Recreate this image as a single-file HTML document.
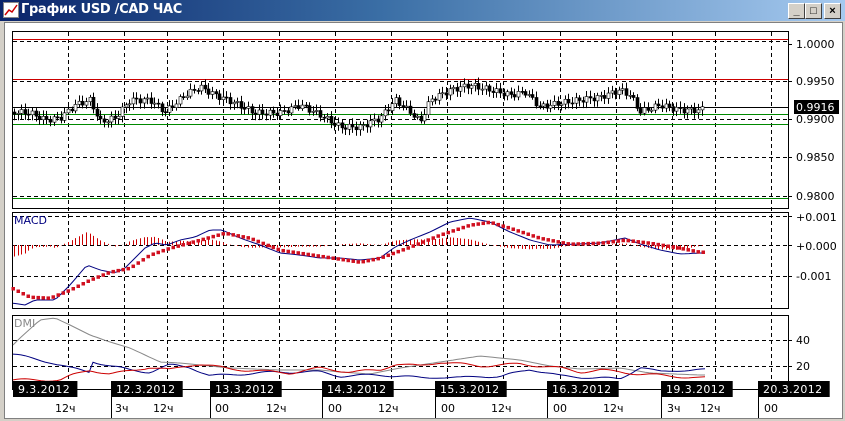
<!DOCTYPE html>
<html><head><meta charset="utf-8"><style>
body{margin:0;width:845px;height:421px;overflow:hidden;background:#d4d0c8;font-family:"Liberation Sans",sans-serif}
#t{position:absolute;left:0;top:0;width:845px;height:21px;background:linear-gradient(90deg,#0a246a,#3a6ea5 45%,#a6caf0)}
#t span{position:absolute;left:21px;top:2px;color:#fff;font:bold 13px "DejaVu Sans","Liberation Sans",sans-serif;letter-spacing:-0.3px}
.b{position:absolute;top:3px;width:15px;height:14px;background:#d4d0c8;border:1px solid;border-color:#fff #404040 #404040 #fff;font:bold 11px "Liberation Sans",sans-serif;text-align:center;line-height:14px;color:#000}
#c{position:absolute;left:4px;top:22px;width:837px;height:395px;background:#fff;border:1px solid #808080}
svg{position:absolute;left:0;top:0}
</style></head><body>
<div id="t"><svg width="16" height="16" style="left:3px;top:2px"><rect x="0.5" y="0.5" width="15" height="15" fill="#fff" stroke="#888"/><polyline points="2,13 6,8 9,10 14,3" fill="none" stroke="#c00" stroke-width="1.5"/></svg><span>График USD /CAD  ЧАС</span>
<div class="b" style="left:788px">_</div><div class="b" style="left:805px">□</div><div class="b" style="left:824px">×</div></div>
<div id="c"></div>
<svg id="s" width="845" height="421" font-family="DejaVu Sans, Liberation Sans, sans-serif" font-size="11">
<g fill="none" stroke="#000" stroke-width="1">
<rect x="12.5" y="31.5" width="776" height="177"/>
<rect x="12.5" y="212.5" width="776" height="96"/>
<rect x="12.5" y="315.5" width="776" height="74"/>
</g>
<g id="grid" stroke="#000" stroke-dasharray="4,3" fill="none"></g>
<g stroke-width="1" fill="none">
<line x1="13" y1="39.5" x2="788" y2="39.5" stroke="#c00"/>
<line x1="13" y1="41.5" x2="788" y2="41.5" stroke="#000" stroke-dasharray="4,3"/>
<line x1="13" y1="79.5" x2="788" y2="79.5" stroke="#c00"/>
<line x1="13" y1="107.5" x2="788" y2="107.5" stroke="#000"/>
<line x1="13" y1="114.5" x2="788" y2="114.5" stroke="#080"/>
<line x1="13" y1="124.5" x2="788" y2="124.5" stroke="#080"/>
<line x1="13" y1="198.5" x2="788" y2="198.5" stroke="#080"/>
<line x1="13" y1="389.5" x2="788" y2="389.5" stroke="#000"/>
</g>
<g id="plot"></g>
<g fill="#000">
<text x="796" y="48">1.0000</text><text x="796" y="85">0.9950</text><text x="796" y="123">0.9900</text>
<text x="796" y="161">0.9850</text><text x="796" y="200">0.9800</text>
<rect x="794" y="100" width="45" height="14"/><text x="796" y="111" fill="#fff">0.9916</text>
<text x="796" y="221">+0.001</text><text x="796" y="250">+0.000</text><text x="796" y="280">-0.001</text>
<text x="796" y="344">40</text><text x="796" y="370">20</text>
<text x="14" y="224" fill="#000080">MACD</text><text x="14" y="327" fill="#888">DMI</text>
</g>
<g id="dates"></g>
</svg>
<script>
var NS="http://www.w3.org/2000/svg",P=document.getElementById("plot");
function el(t,a,p){var e=document.createElementNS(NS,t);for(var k in a)e.setAttribute(k,a[k]);(p||P).appendChild(e);return e}
var G=document.getElementById("grid");
[68,124,167,223,279,335,391,447,503,560,616,672,715,771].forEach(function(x){
el("line",{x1:x+.5,y1:32,x2:x+.5,y2:389},G);});
[81,119,157,196,216,245,276,340,366].forEach(function(y){el("line",{x1:13,y1:y+.5,x2:788,y2:y+.5},G)});
[44,81,119,157,196,216,245,276,340,366].forEach(function(y){el("line",{x1:788,y1:y+.5,x2:792,y2:y+.5,"stroke-dasharray":"none"},G)});
function interp(k,x){for(var i=1;i<k.length;i++)if(x<=k[i][0]){var a=k[i-1],b=k[i];return a[1]+(b[1]-a[1])*(x-a[0])/(b[0]-a[0])}return k[k.length-1][1]}
function pl(k,c,w,d){var s="";for(var x=13;x<=705;x+=4)s+=x+","+(interp(k,x)+(d?Math.sin(x*1.7)*d:0)).toFixed(1)+" ";el("polyline",{points:s,fill:"none",stroke:c,"stroke-width":w||1})}
var price=[[12,112],[30,113],[45,120],[60,118],[75,105],[90,100],[100,122],[115,118],[130,100],[150,100],[165,112],[185,95],[200,87],[215,95],[235,103],[255,113],[280,113],[300,105],[320,115],[340,127],[360,127],[380,118],[395,100],[410,112],[420,122],[430,100],[450,90],[470,85],[490,90],[510,95],[525,92],[540,107],[560,103],[580,100],[600,97],[620,90],[630,95],[640,112],[660,105],[680,110],[700,110],[705,108]];
var prev=interp(price,12);
for(var x=14;x<=705;x+=3.6){var c=interp(price,x)+Math.sin(x*2.3)*3,o=prev,h=Math.min(o,c)-2-Math.abs(Math.sin(x*.7))*4,l=Math.max(o,c)+2+Math.abs(Math.cos(x*.9))*4,xx=Math.round(x);
el("line",{x1:xx+.5,y1:h,x2:xx+.5,y2:l,stroke:"#000"});
el("rect",{x:xx-1,y:Math.min(o,c),width:3,height:Math.max(1,Math.abs(c-o)),fill:c>o?"#000":"#fff",stroke:"#000","stroke-width":.6});prev=c}
var mb=[[12,303],[25,305],[35,300],[55,300],[70,285],[87,265],[100,270],[115,273],[125,268],[145,248],[155,243],[167,245],[180,240],[195,237],[210,230],[222,230],[240,238],[260,245],[280,253],[300,255],[320,258],[340,258],[360,260],[380,258],[395,247],[410,240],[430,232],[450,222],[470,218],[490,222],[510,232],[530,240],[550,245],[580,244],[600,243],[625,238],[640,244],[660,250],[680,254],[700,253]];
var mr=[[12,288],[30,297],[50,298],[70,290],[90,280],[110,272],[130,268],[150,255],[170,248],[200,240],[225,233],[250,238],[280,250],[320,256],[360,262],[380,258],[410,247],[440,235],[470,225],[490,222],[510,228],[540,238],[570,244],[600,243],[625,240],[650,243],[680,248],[700,252]];
for(var x=14;x<=705;x+=3.6){var d=(interp(mr,x)-interp(mb,x))*0.8;el("line",{x1:Math.round(x)+.5,y1:245,x2:Math.round(x)+.5,y2:245-d,stroke:"#c00"})}
pl(mb,"#000080",1);
for(var x=13;x<=703;x+=5){el("rect",{x:x-1.5,y:interp(mr,x)-1.5,width:3.5,height:3.5,fill:"#d01020"})}
pl([[12,346],[20,338],[40,320],[55,318],[70,325],[90,335],[110,342],[130,348],[160,362],[180,363],[200,365],[230,368],[280,370],[320,370],[340,372],[370,374],[400,368],[440,362],[480,356],[500,358],[520,360],[550,366],[580,369],[620,368],[650,373],[700,375]],"#888",1);
pl([[12,354],[30,358],[50,362],[70,368],[90,372],[92,361],[110,366],[130,370],[150,372],[170,365],[190,367],[210,376],[240,374],[280,372],[320,372],[340,376],[380,375],[400,376],[420,378],[440,377],[460,378],[480,376],[500,377],[530,369],[560,376],[620,379],[640,367],[660,372],[680,370],[700,370]],"#000080",1,1.2);
pl([[12,380],[60,380],[70,376],[90,370],[110,374],[130,371],[150,367],[170,370],[190,365],[200,364],[230,369],[260,371],[290,373],[320,368],[350,372],[380,370],[395,364],[420,366],[440,362],[460,364],[480,366],[520,364],[540,366],[560,368],[580,372],[600,370],[640,374],[700,378]],"#c00",1,1.2);
var D=document.getElementById("dates");
[[13,"9.3.2012",0],[111,"12.3.2012",1],[210,"13.3.2012",1],[322,"14.3.2012",1],[435,"15.3.2012",1],[547,"16.3.2012",1],[661,"19.3.2012",1],[758,"20.3.2012",1]].forEach(function(a){
el("rect",{x:a[0],y:381,width:a[1].length*7.3+6,height:16,fill:"#000"},D);
var t=el("text",{x:a[0]+5,y:393,fill:"#fff","letter-spacing":"0.4"},D);t.textContent=a[1];
if(a[2])el("line",{x1:a[0]+.5,y1:397,x2:a[0]+.5,y2:418,stroke:"#000"},D);});
[[55,"12ч"],[115,"3ч"],[153,"12ч"],[215,"00"],[266,"12ч"],[328,"00"],[378,"12ч"],[441,"00"],[491,"12ч"],[553,"00"],[603,"12ч"],[667,"3ч"],[700,"12ч"],[764,"00"]].forEach(function(a){var t=el("text",{x:a[0],y:412,fill:"#000"},D);t.textContent=a[1]});
</script>
</body></html>
